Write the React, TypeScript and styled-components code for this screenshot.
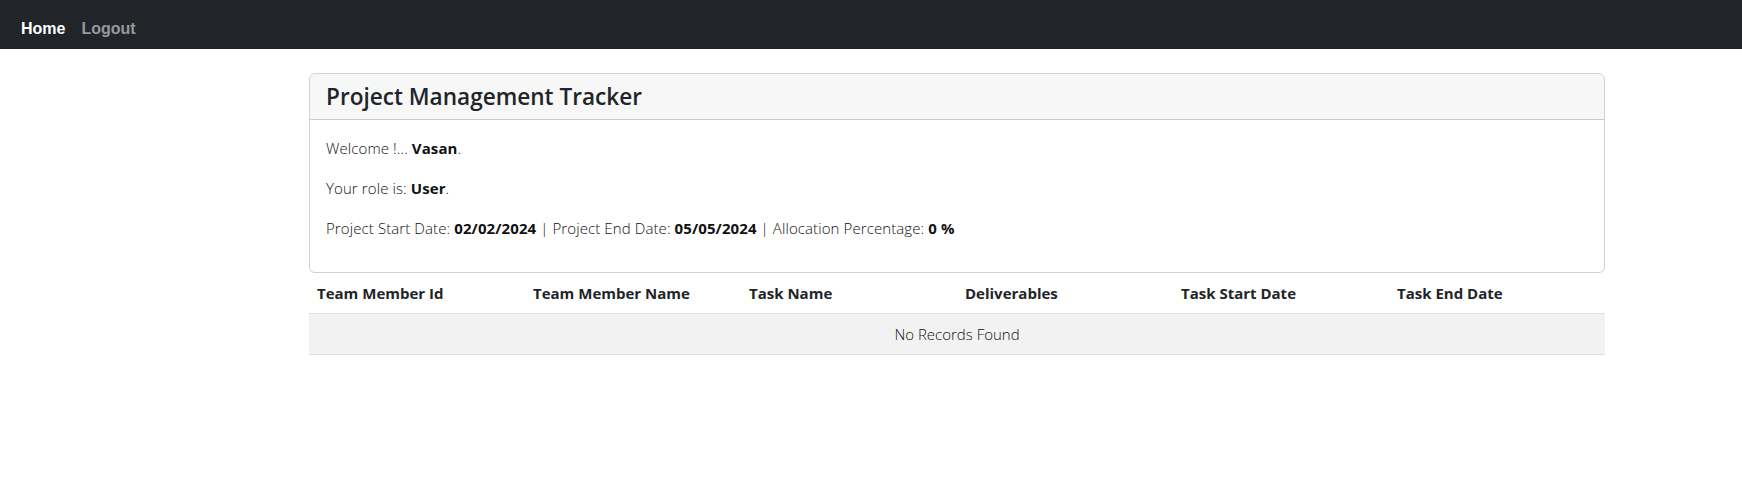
import React from 'react'
import styled, { createGlobalStyle } from 'styled-components'

const colors = {
  dark: '#212529',
  text: '#212529',
  muted: 'rgba(255, 255, 255, 0.55)',
  border: 'rgba(0, 0, 0, 0.175)',
  headerBg: 'rgba(0, 0, 0, 0.03)',
  stripe: '#f2f2f2',
  line: '#dee2e6'
}

const GlobalStyle = createGlobalStyle`
  * {
    box-sizing: border-box;
  }

  body {
    margin: 0;
    background: #fff;
    color: ${colors.text};
    font-family: 'Open Sans', 'Noto Sans', sans-serif;
    font-size: 16px;
    line-height: 1.5;
  }
`

const NavBar = styled.nav`
  background-color: ${colors.dark};
  height: 49px;
  display: flex;
  align-items: flex-start;
  padding: 17px 0 0 16px;
`

const NavLink = styled.a<{ active?: boolean }>`
  font-family: 'Liberation Sans', Arial, sans-serif;
  font-size: 16px;
  font-weight: 700;
  line-height: 24px;
  padding: 0 8px 0 5px;
  margin-right: 3px;
  color: ${(p) => (p.active ? '#fff' : colors.muted)};
  text-decoration: none;
  cursor: pointer;
`

const Main = styled.main`
  margin: 24px 0 0 309px;
  width: 1296px;
`

const Card = styled.section`
  border: 1px solid ${colors.border};
  border-radius: 6px;
  overflow: hidden;
`

const CardHeader = styled.div`
  background-color: ${colors.headerBg};
  border-bottom: 1px solid ${colors.border};
  padding: 9px 16px 7px;
`

const Title = styled.h4`
  margin: 0;
  font-size: 22.6px;
  font-weight: 600;
  line-height: 28.8px;
`

const CardBody = styled.div`
  padding: 16px;
`

const Line = styled.p`
  margin: 0 0 16px;
  font-size: 15px;
  font-weight: 300;
  line-height: 24px;
  letter-spacing: 0.1px;
  color: #111;

  b {
    font-weight: 700;
  }
`

const Table = styled.table`
  width: 100%;
  border-collapse: collapse;
  table-layout: fixed;
`

const Th = styled.th`
  text-align: left;
  padding: 8px;
  font-size: 15px;
  font-weight: 700;
  line-height: 24px;
  border-bottom: 1px solid ${colors.line};
`

const EmptyCell = styled.td`
  background-color: ${colors.stripe};
  text-align: center;
  padding: 8px;
  font-size: 15px;
  font-weight: 300;
  line-height: 24px;
  color: #111;
  border-bottom: 1px solid ${colors.line};
`

const columns = [
  'Team Member Id',
  'Team Member Name',
  'Task Name',
  'Deliverables',
  'Task Start Date',
  'Task End Date'
]

const App = () => (
  <>
    <GlobalStyle />
    <NavBar>
      <NavLink active>Home</NavLink>
      <NavLink>Logout</NavLink>
    </NavBar>
    <Main>
      <Card>
        <CardHeader>
          <Title>Project Management Tracker</Title>
        </CardHeader>
        <CardBody>
          <Line>
            Welcome !... <b>Vasan</b>.
          </Line>
          <Line>
            Your role is: <b>User</b>.
          </Line>
          <Line>
            Project Start Date: <b>02/02/2024</b> | Project End Date:{' '}
            <b>05/05/2024</b> | Allocation Percentage: <b>0 %</b>
          </Line>
        </CardBody>
      </Card>
      <Table>
        <thead>
          <tr>
            {columns.map((c) => (
              <Th key={c}>{c}</Th>
            ))}
          </tr>
        </thead>
        <tbody>
          <tr>
            <EmptyCell colSpan={6}>No Records Found</EmptyCell>
          </tr>
        </tbody>
      </Table>
    </Main>
  </>
)

export default App
